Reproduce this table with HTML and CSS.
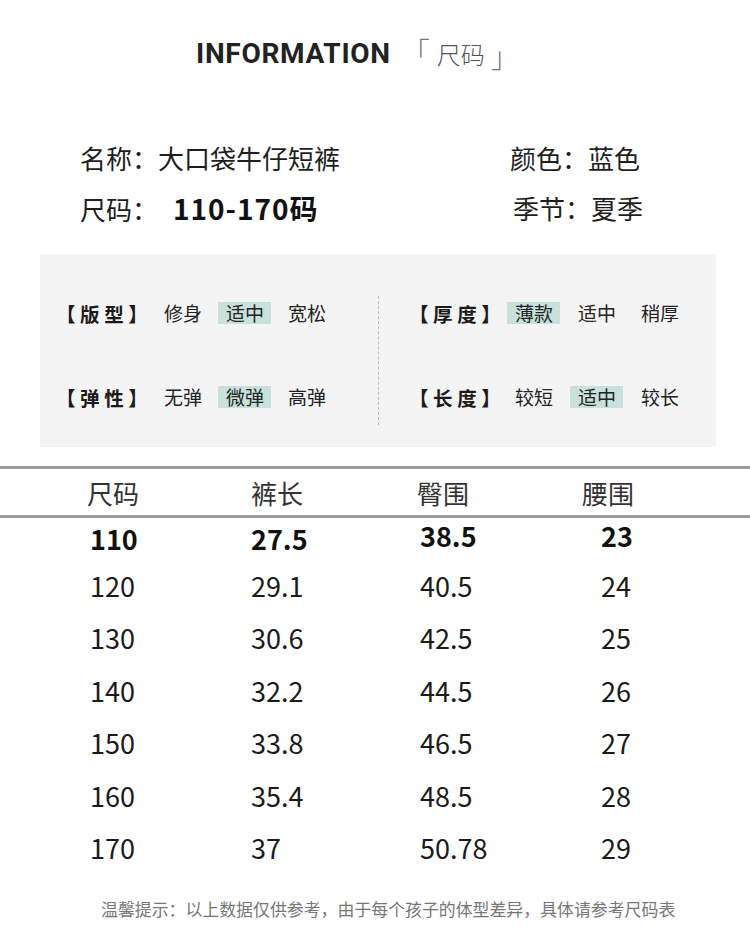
FILE: index.html
```html
<!DOCTYPE html>
<html lang="zh-CN">
<head>
<meta charset="utf-8">
<title>尺码信息</title>
<link rel="stylesheet" href="styles.css">
</head>
<body>
<div class="page">
  <header class="title">
    <span class="title-en">INFORMATION</span>
    <span class="title-cn"><span class="br br-open">「</span><span class="cn-word">尺码</span><span class="br br-close">」</span></span>
  </header>

  <section class="info">
    <div class="info-col info-left">
      <div class="info-row">名称：大口袋牛仔短裤</div>
      <div class="info-row">尺码：<b class="range">110-170码</b></div>
    </div>
    <div class="info-col info-right">
      <div class="info-row">颜色：蓝色</div>
      <div class="info-row shift">季节：夏季</div>
    </div>
  </section>

  <section class="spec">
    <div class="spec-col spec-left">
      <div class="spec-row">
        <span class="label">【版型】</span>
        <span class="opt">修身</span><span class="opt on">适中</span><span class="opt">宽松</span>
      </div>
      <div class="spec-row">
        <span class="label">【弹性】</span>
        <span class="opt">无弹</span><span class="opt on">微弹</span><span class="opt">高弹</span>
      </div>
    </div>
    <div class="divider"></div>
    <div class="spec-col spec-right">
      <div class="spec-row">
        <span class="label">【厚度】</span>
        <span class="opt on">薄款</span><span class="opt">适中</span><span class="opt">稍厚</span>
      </div>
      <div class="spec-row">
        <span class="label">【长度】</span>
        <span class="opt">较短</span><span class="opt on">适中</span><span class="opt">较长</span>
      </div>
    </div>
  </section>

  <section class="sizes">
    <div class="thead">
      <span>尺码</span><span>裤长</span><span>臀围</span><span>腰围</span>
    </div>
    <div class="trow first"><span>110</span><span>27.5</span><span class="up">38.5</span><span class="up">23</span></div>
    <div class="trow"><span>120</span><span>29.1</span><span>40.5</span><span>24</span></div>
    <div class="trow"><span>130</span><span>30.6</span><span>42.5</span><span>25</span></div>
    <div class="trow"><span>140</span><span>32.2</span><span>44.5</span><span>26</span></div>
    <div class="trow"><span>150</span><span>33.8</span><span>46.5</span><span>27</span></div>
    <div class="trow"><span>160</span><span>35.4</span><span>48.5</span><span>28</span></div>
    <div class="trow"><span>170</span><span>37</span><span>50.78</span><span>29</span></div>
  </section>

  <p class="note">温馨提示：以上数据仅供参考，由于每个孩子的体型差异，具体请参考尺码表</p>
</div>
</body>
</html>
```

FILE: styles.css
```css
html, body {
  margin: 0;
  padding: 0;
  background: #ffffff;
}

body {
  font-family: "Noto Sans CJK SC", "Noto Sans", sans-serif;
  color: #222;
}

.page {
  width: 750px;
  height: 947px;
  overflow: hidden;
}

/* title */
.title {
  height: 106px;
  display: flex;
  align-items: center;
  padding-left: 196px;
  box-sizing: border-box;
}

.title-en {
  font-family: Roboto, "Liberation Sans", sans-serif;
  font-weight: 700;
  font-size: 28px;
  letter-spacing: 0.7px;
  color: #222;
}

.title-cn {
  margin-left: 11px;
  display: flex;
  align-items: center;
  height: 40px;
}

.title-cn .br {
  font-size: 28px;
  color: #777;
  font-weight: 300;
  line-height: 28px;
  position: relative;
}

.title-cn .br-open {
  top: -2px;
}

.title-cn .br-close {
  top: 3px;
}

.title-cn .cn-word {
  font-size: 24px;
  font-weight: 300;
  color: #555;
  margin: 0 6px 0 7px;
}

/* info */
.info {
  display: flex;
  margin-top: 27px;
}

.info-col {
  display: flex;
  flex-direction: column;
}

.info-left {
  padding-left: 80px;
  width: 430px;
}

.info-row {
  height: 50px;
  line-height: 50px;
  font-size: 26px;
  color: #1e1e1e;
}

.info-row.shift {
  padding-left: 3px;
}

.range {
  font-weight: 700;
  font-size: 28px;
  letter-spacing: 1px;
  margin-left: 15px;
  color: #111;
}

/* spec box */
.spec {
  margin: 21px 34px 0 40px;
  height: 193px;
  background: #f4f4f4;
  display: flex;
}

.spec-col {
  display: flex;
  flex-direction: column;
  padding-top: 38px;
  gap: 42px;
}

.spec-left {
  width: 338px;
  box-sizing: border-box;
  padding-left: 16px;
}

.spec-right {
  padding-left: 30px;
}

.divider {
  margin-top: 42px;
  height: 129px;
  border-left: 1px dashed #bdbdbd;
}

.spec-row {
  height: 42px;
  display: flex;
  align-items: center;
  font-size: 19px;
  color: #222;
}

.label {
  font-size: 19.5px;
  font-weight: 700;
  letter-spacing: 4.6px;
  color: #1a1a1a;
  margin-right: 4px;
}

.spec-right .label {
  margin-right: 2px;
}

.opt {
  padding: 0 7.5px;
  height: 22px;
  line-height: 22px;
  margin-right: 9px;
}

.spec-right .opt {
  margin-right: 10px;
}

.opt.on {
  background: #c8e2db;
}

/* table */
.sizes {
  margin-top: 19px;
}

.thead {
  height: 46px;
  border-top: 3px solid #9c9c9c;
  border-bottom: 3px solid #9c9c9c;
  display: grid;
  grid-template-columns: 164px 166px 165px 1fr;
  padding-left: 87px;
  align-items: center;
  font-size: 26px;
  color: #333;
}

.trow {
  height: 52.5px;
  display: grid;
  grid-template-columns: 161px 169px 181px 1fr;
  padding-left: 90px;
  align-items: center;
  font-size: 27px;
  color: #1a1a1a;
}

.trow.first {
  height: 41px;
  font-weight: 700;
  color: #111;
}

.trow .up {
  position: relative;
  top: -3px;
}

/* note */
.note {
  margin: 23px 0 0 0;
  padding-left: 101px;
  font-size: 16.9px;
  line-height: 24px;
  color: #777;
}
```
